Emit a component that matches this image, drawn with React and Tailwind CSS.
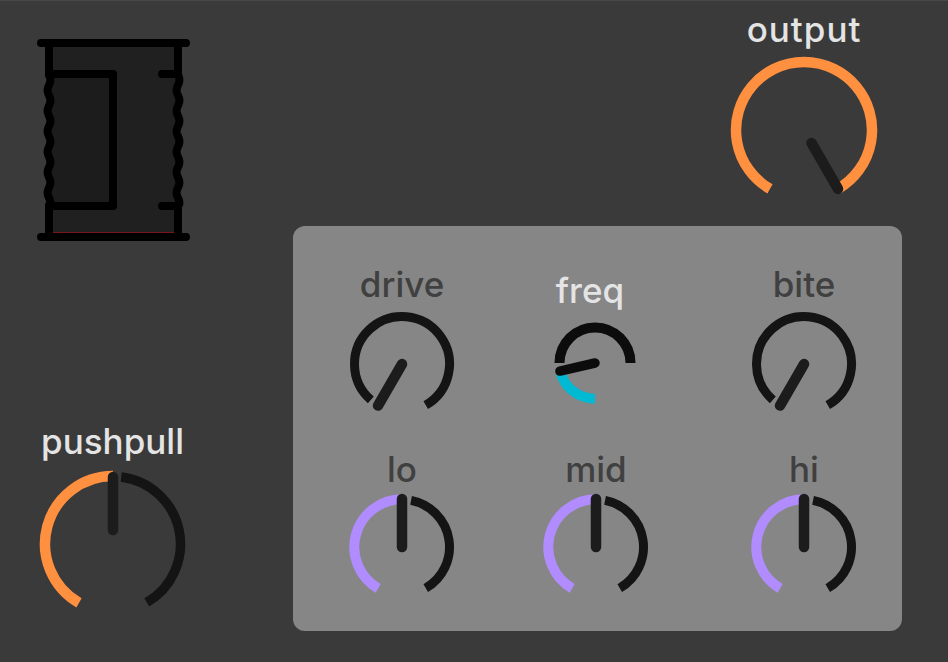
const FONT = { fontFamily: "Inter, sans-serif" };

const ORANGE = "#ff9040";
const PURPLE = "#b08cff";
const CYAN = "#00b9d2";
const RING = "#141414";
const NEEDLE = "#1c1c1c";

const polar = (r, deg) => {
  const a = (deg * Math.PI) / 180;
  return [r * Math.sin(a), -r * Math.cos(a)];
};

function Arc({ r, from, to, color, width }) {
  const [x1, y1] = polar(r, from);
  const [x2, y2] = polar(r, to);
  const large = to - from > 180 ? 1 : 0;
  return (
    <path
      d={`M${x1} ${y1}A${r} ${r} 0 ${large} 1 ${x2} ${y2}`}
      fill="none"
      stroke={color}
      strokeWidth={width}
    />
  );
}

function Dial({ size, arcs, needle, needleWidth, needleFrom = 0, needleTo, needleColor = NEEDLE }) {
  const half = size / 2;
  const [x1, y1] = polar(needleFrom, needle);
  const [x2, y2] = polar(needleTo, needle);
  return (
    <svg
      width={size}
      height={size}
      viewBox={`${-half} ${-half} ${size} ${size}`}
      className="block overflow-visible"
    >
      {arcs.map((a, i) => (
        <Arc key={i} {...a} />
      ))}
      <line
        x1={x1}
        y1={y1}
        x2={x2}
        y2={y2}
        stroke={needleColor}
        strokeWidth={needleWidth}
        strokeLinecap="round"
      />
    </svg>
  );
}

function PanelKnob({ label, arcs, needle, top }) {
  return (
    <div className="w-[120px] flex flex-col items-center">
      <div className="h-9 leading-9 text-[35px] font-medium text-[#404040] whitespace-nowrap" style={FONT}>
        {label}
      </div>
      <div className={top ? "mt-[10px]" : "mt-2"}>
        <Dial size={104} arcs={arcs} needle={needle} needleWidth={10.5} needleTo={48} />
      </div>
    </div>
  );
}

const minArcs = [{ r: 47.5, width: 9, from: -139, to: 150, color: RING }];
const midArcs = [
  { r: 47.7, width: 10, from: -150, to: 0, color: PURPLE },
  { r: 47.5, width: 9, from: 11, to: 150, color: RING },
];

// the can, with its wavy walls
function wave(x) {
  let d = `M${x} 74`;
  for (let y = 75; y <= 206; y += 1) {
    const dx = y < 76 || y > 204 ? 0 : 1.4 * Math.cos(((y - 80) / 20.5) * 2 * Math.PI);
    d += `L${x + dx} ${y}`;
  }
  return d;
}

function Can() {
  return (
    <svg width={160} height={202} viewBox="33 39 160 202" className="block">
      <rect x={49} y={43} width={129} height={194} fill="#202020" />
      <rect x={49} y={74} width={64} height={132} fill="#1c1c1c" />
      <line x1={53} y1={232.5} x2={174} y2={232.5} stroke="#7a1518" strokeWidth={1} />
      <g fill="none" stroke="#000" strokeWidth={8} strokeLinecap="round" strokeLinejoin="round">
        <path d="M41 43H186M41 237H186" />
        <path d="M49 43V74M49 206V237M178 43V74M178 206V237" />
        <path d={wave(49)} />
        <path d={wave(178)} />
        <path d="M49 74H113V206H49" />
        <path d="M178 74H162M178 206H162" />
      </g>
    </svg>
  );
}

export default function App() {
  return (
    <div className="w-[948px] h-[662px] bg-[#3a3a3a] border-t border-[#474747] flex overflow-hidden">
      {/* left column */}
      <div className="w-[293px] shrink-0">
        <div className="ml-[33px] mt-[38px]">
          <Can />
        </div>
        <div className="ml-[33px] mt-[182px] w-[160px] flex flex-col items-center">
          <div className="h-9 leading-9 text-[35px] font-medium text-[#e4e4e4] mr-px" style={FONT}>
            pushpull
          </div>
          <div className="mt-3">
            <Dial
              size={146}
              arcs={[
                { r: 68, width: 10.5, from: -150, to: 0, color: ORANGE },
                { r: 67.5, width: 9.5, from: 7, to: 150, color: RING },
              ]}
              needle={0}
              needleWidth={10.5}
              needleFrom={14}
              needleTo={67}
            />
          </div>
        </div>
      </div>

      {/* right column */}
      <div className="flex-1">
        <div className="ml-[431px] mt-[10px] w-[160px] flex flex-col items-center">
          <div className="h-9 leading-9 text-[35px] font-medium text-[#e4e4e4] tracking-[1px]" style={FONT}>
            output
          </div>
          <div className="mt-[9.5px]">
            <Dial
              size={146}
              arcs={[{ r: 68, width: 10.5, from: -150, to: 150, color: ORANGE }]}
              needle={150}
              needleWidth={10.5}
              needleFrom={15}
              needleTo={68}
            />
          </div>
        </div>

        <div className="mt-[23px] w-[609px] h-[405px] rounded-xl bg-[#868686] pl-[49px] pt-10 grid grid-cols-[194px_208px_120px] grid-rows-[185px_auto]">
          <PanelKnob label="drive" arcs={minArcs} needle={-150} top />
          <div className="w-[120px] flex flex-col items-center pt-[6px]">
            <div className="h-9 leading-9 text-[35px] font-medium text-[#e4e4e4] mr-3" style={FONT}>
              freq
            </div>
            <div className="mt-[15px] mr-[2px]">
              <Dial
                size={80}
                arcs={[
                  { r: 35.5, width: 10, from: -90, to: 90, color: "#0c0c0c" },
                  { r: 35.7, width: 10, from: 180, to: 257, color: CYAN },
                ]}
                needle={-103}
                needleWidth={9.5}
                needleTo={36}
                needleColor="#0c0c0c"
              />
            </div>
          </div>
          <PanelKnob label="bite" arcs={minArcs} needle={-150} top />
          <PanelKnob label="lo" arcs={midArcs} needle={0} />
          <PanelKnob label="mid" arcs={midArcs} needle={0} />
          <PanelKnob label="hi" arcs={midArcs} needle={0} />
        </div>
      </div>
    </div>
  );
}
